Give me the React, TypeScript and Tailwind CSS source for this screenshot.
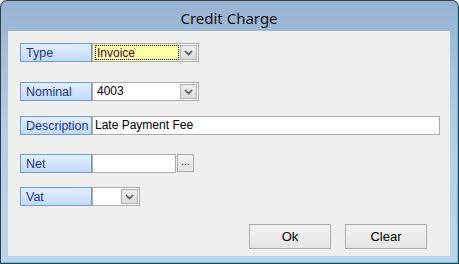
import React from "react";

const Chevron = () => (
  <svg width="9" height="6" viewBox="0 0 9 6">
    <path d="M1 1 L4.5 4.5 L8 1" fill="none" stroke="#555" strokeWidth="1.6" />
  </svg>
);

const Label = ({ text }: { text: string }) => (
  <div className="w-[72px] h-[19px] shrink-0 border border-[#6f9ad6] bg-gradient-to-b from-[#e4effd] to-[#c3daf8] text-[#1a3588] text-[12.5px] leading-[18px] pl-[5px]">
    {text}
  </div>
);

const DropBtn = () => (
  <div className="w-[17px] h-[15px] shrink-0 border border-[#b3b3b3] bg-gradient-to-b from-[#ededed] to-[#dcdcdc] flex items-center justify-center mr-[1px]">
    <Chevron />
  </div>
);

export default function App() {
  return (
    <div
      className="w-[459px] h-[264px] bg-[#3c3c3c] rounded-t-[7px] p-[1px] flex"
      style={{ fontFamily: '"Liberation Sans", Arial, sans-serif' }}
    >
      <div className="flex-1 flex flex-col rounded-t-[6px] border-r border-b border-[#4cc6e6] bg-gradient-to-b from-[#97b3d3] via-[#b5cde8] to-[#bcd4ee] overflow-hidden">
        <div
          className="h-[30px] shrink-0 flex items-center justify-center text-[15px] text-[#111] pt-[5px]"
          style={{ fontFamily: '"Noto Sans", "Open Sans", sans-serif' }}
        >
          Credit Charge
        </div>
        <div className="flex-1 mx-[7px] mb-[6px] bg-[#efefef] flex flex-col pl-[12px] pt-[12px]">
          <div className="flex h-[19px]">
            <Label text="Type" />
            <div className="w-[107px] h-[19px] border border-[#ababab] bg-white flex items-center">
              <div className="flex-1 h-full bg-[#ffffa6] flex items-center pl-[2px] pr-[1px]">
                <div className="flex-1 h-[15px] border border-dotted border-black text-[12px] leading-[14px] text-[#4f0046] pl-[1px]">
                  Invoice
                </div>
              </div>
              <DropBtn />
            </div>
          </div>

          <div className="flex h-[19px] mt-[20px]">
            <Label text="Nominal" />
            <div className="w-[107px] h-[19px] border border-[#ababab] bg-white flex items-center">
              <div className="flex-1 text-[12px] text-black pl-[4px] leading-[15px]">4003</div>
              <DropBtn />
            </div>
          </div>

          <div className="flex h-[19px] mt-[15px]">
            <Label text="Description" />
            <div className="w-[348px] h-[19px] border border-[#ababab] bg-white text-[12px] text-black pl-[2px] leading-[17px]">
              Late Payment Fee
            </div>
          </div>

          <div className="flex h-[19px] mt-[19px]">
            <Label text="Net" />
            <div className="w-[84px] h-[19px] border border-[#ababab] bg-white" />
            <div className="ml-[1px] w-[17px] h-[18px] border border-[#a9a9a9] bg-gradient-to-b from-[#f3f3f3] to-[#e4e4e4] text-[10px] leading-[14px] text-black text-center">
              ...
            </div>
          </div>

          <div className="flex h-[19px] mt-[14px]">
            <Label text="Vat" />
            <div className="w-[48px] h-[19px] border border-[#ababab] bg-white flex items-center justify-end">
              <DropBtn />
            </div>
          </div>

          <div className="flex mt-[18px] pl-[229px] gap-[14px]">
            <button className="w-[82px] h-[25px] border border-[#adadad] bg-gradient-to-b from-[#f3f3f3] to-[#e5e5e5] text-[13px] text-black">
              Ok
            </button>
            <button className="w-[82px] h-[25px] border border-[#adadad] bg-gradient-to-b from-[#f3f3f3] to-[#e5e5e5] text-[13px] text-black">
              Clear
            </button>
          </div>
        </div>
      </div>
    </div>
  );
}
